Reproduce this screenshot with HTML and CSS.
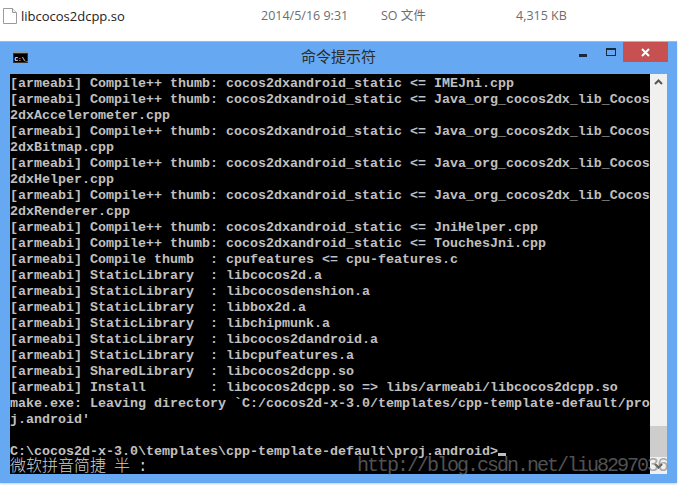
FILE: index.html
```html
<!DOCTYPE html>
<html lang="zh">
<head>
<meta charset="utf-8">
<title>命令提示符</title>
<link rel="stylesheet" href="styles.css">
</head>
<body>
<div class="file-row">
  <div class="file-name">
    <svg class="file-icon" width="14" height="16" viewBox="0 0 14 16"><path d="M.5.5h9l4 4v11H.5z" fill="#fff" stroke="#9a9a9a"/><path d="M9.5.5v4h4" fill="#eee" stroke="#9a9a9a"/></svg>
    <span>libcocos2dcpp.so</span>
  </div>
  <div class="file-date">2014/5/16 9:31</div>
  <div class="file-type">SO 文件</div>
  <div class="file-size">4,315 KB</div>
</div>
<div class="window">
  <div class="titlebar">
    <svg class="app-icon" width="15" height="12" viewBox="0 0 15 12"><rect width="15" height="12" fill="#333"/><rect y="0" width="15" height="2" fill="#999"/><rect x="1" y="3" width="13" height="8" fill="#000"/><text x="1.5" y="9.5" class="app-icon-text">C:\_</text></svg>
    <div class="title">命令提示符</div>
    <div class="controls">
      <div class="min"></div>
      <div class="max"></div>
      <div class="close"><svg width="9" height="9" viewBox="0 0 9 9"><path d="M1 1l7 7M8 1l-7 7" stroke="#fff" stroke-width="2"/></svg></div>
    </div>
  </div>
  <div class="client">
    <pre class="console">[armeabi] Compile++ thumb: cocos2dxandroid_static &lt;= IMEJni.cpp
[armeabi] Compile++ thumb: cocos2dxandroid_static &lt;= Java_org_cocos2dx_lib_Cocos
2dxAccelerometer.cpp
[armeabi] Compile++ thumb: cocos2dxandroid_static &lt;= Java_org_cocos2dx_lib_Cocos
2dxBitmap.cpp
[armeabi] Compile++ thumb: cocos2dxandroid_static &lt;= Java_org_cocos2dx_lib_Cocos
2dxHelper.cpp
[armeabi] Compile++ thumb: cocos2dxandroid_static &lt;= Java_org_cocos2dx_lib_Cocos
2dxRenderer.cpp
[armeabi] Compile++ thumb: cocos2dxandroid_static &lt;= JniHelper.cpp
[armeabi] Compile++ thumb: cocos2dxandroid_static &lt;= TouchesJni.cpp
[armeabi] Compile thumb  : cpufeatures &lt;= cpu-features.c
[armeabi] StaticLibrary  : libcocos2d.a
[armeabi] StaticLibrary  : libcocosdenshion.a
[armeabi] StaticLibrary  : libbox2d.a
[armeabi] StaticLibrary  : libchipmunk.a
[armeabi] StaticLibrary  : libcocos2dandroid.a
[armeabi] StaticLibrary  : libcpufeatures.a
[armeabi] SharedLibrary  : libcocos2dcpp.so
[armeabi] Install        : libcocos2dcpp.so =&gt; libs/armeabi/libcocos2dcpp.so
make.exe: Leaving directory `C:/cocos2d-x-3.0/templates/cpp-template-default/pro
j.android'

C:\cocos2d-x-3.0\templates\cpp-template-default\proj.android&gt;<span class="cursor"></span>
<span class="ime">微软拼音简捷 半 :</span></pre>
    <div class="scrollbar">
      <svg class="arrow" width="17" height="17" viewBox="0 0 17 17"><path d="M5 10l3.500-3.500 3.500 3.500" fill="none" stroke="#555" stroke-width="2"/></svg>
      <div class="track"><div class="thumb"></div></div>
      <svg class="arrow" width="17" height="17" viewBox="0 0 17 17"><path d="M5 7l3.500 3.500 3.500-3.500" fill="none" stroke="#555" stroke-width="2"/></svg>
    </div>
    <div class="watermark">http://blog.csdn.net/liu8297036</div>
  </div>
</div>
</body>
</html>
```

FILE: styles.css
```css
html, body {
  margin: 0;
  padding: 0;
  background: #fff;
}
body {
  width: 678px;
  height: 486px;
  overflow: hidden;
  font-family: "Noto Sans CJK SC", sans-serif;
}
.file-row {
  height: 41px;
  display: flex;
  align-items: flex-start;
  font: 12.5px/16px "Open Sans", "Noto Sans CJK SC", sans-serif;
  color: #6d6d6d;
  padding-top: 8px;
  box-sizing: border-box;
}
.file-name {
  width: 261px;
  padding-left: 3px;
  box-sizing: border-box;
  display: flex;
  gap: 4px;
  color: #222;
  font-size: 13px;
}
.file-icon { flex: none; }
.file-date { width: 120px; }
.file-type { width: 135px; }
.window {
  width: 677px;
  height: 442px;
  background: #66a9f2;
  border-top: 1px solid #b5b5b5;
  box-sizing: border-box;
  padding: 0 10px 9px 0;
  display: flex;
  flex-direction: column;
  box-shadow: 0 1px 2px #ccc;
}
.titlebar {
  height: 32px;
  display: flex;
  align-items: center;
  position: relative;
  flex: none;
}
.app-icon { margin: 0 0 0 13px; position: relative; top: -1px; }
.app-icon-text {
  font: bold 6px "Liberation Mono", monospace;
  fill: #fff;
}
.title {
  position: absolute;
  left: 0;
  right: -10px;
  top: 3px;
  text-align: center;
  font: 15px/22px "Noto Sans CJK SC", sans-serif;
  color: #2b2b2b;
}
.controls {
  margin-left: auto;
  display: flex;
  align-items: flex-start;
  align-self: flex-start;
  position: relative;
}
.min {
  width: 8px;
  height: 3px;
  background: #1a2a3c;
  margin: 12px 19px 0 0;
}
.max {
  width: 8px;
  height: 5px;
  border: 1px solid #1a2a3c;
  border-top-width: 2px;
  margin: 6px 7px 0 0;
  box-sizing: content-box;
}
.close {
  width: 45px;
  height: 20px;
  background: #c75050;
  display: flex;
  align-items: center;
  justify-content: center;
  margin-right: -1px;
}
.client {
  flex: 1;
  margin-left: 10px;
  display: flex;
  position: relative;
  min-height: 0;
  height: 400px;
}
.console {
  flex: 1;
  margin: 0;
  background: #000;
  color: #c0c0c0;
  font: bold 13.33px/16px "Liberation Mono", monospace;
  padding-top: 2px;
  overflow: hidden;
  white-space: pre;
}
.cursor {
  display: inline-block;
  width: 8px;
  height: 3px;
  margin-bottom: -1px;
  background: #c0c0c0;
}
.ime {
  display: inline-block;
  vertical-align: top;
  margin-top: -1px;
  font: 300 16px/16px "Liberation Mono", "Noto Sans CJK SC", monospace;
  word-spacing: -1.6px;
  color: #d0d0d0;
}
.scrollbar {
  width: 17px;
  background: #f0f0f0;
  display: flex;
  flex-direction: column;
  flex: none;
}
.arrow { flex: none; }
.track {
  flex: 1;
  display: flex;
  flex-direction: column;
  justify-content: flex-end;
}
.thumb {
  height: 31px;
  background: #cdcdcd;
}
.watermark {
  position: absolute;
  left: 347px;
  top: 381px;
  font: 20px/22px "Liberation Mono", monospace;
  letter-spacing: -2px;
  color: rgba(128, 128, 128, 0.65);
  white-space: nowrap;
}
```
